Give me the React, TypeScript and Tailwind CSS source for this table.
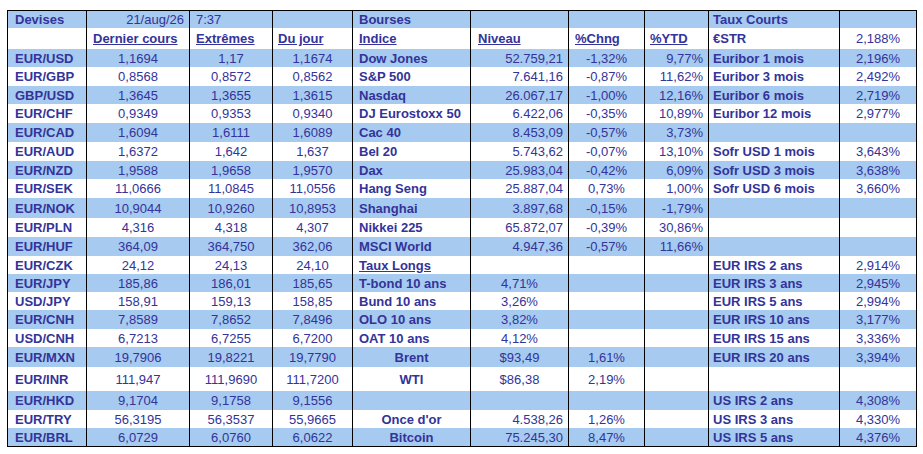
import React from "react";

type Align = "l" | "c" | "r";
type Cell = { t: string; b?: boolean; u?: boolean; a?: Align };

const rowsRaw: string[][] = [
  ["Devises", "21/aug/26", "7:37", "", "Bourses", "", "", "", "Taux Courts", ""],
  ["", "Dernier cours", "Extrêmes", "Du jour", "Indice", "Niveau", "%Chng", "%YTD", "€STR", "2,188%"],
  ["EUR/USD", "1,1694", "1,17", "1,1674", "Dow Jones", "52.759,21", "-1,32%", "9,77%", "Euribor 1 mois", "2,196%"],
  ["EUR/GBP", "0,8568", "0,8572", "0,8562", "S&P 500", "7.641,16", "-0,87%", "11,62%", "Euribor 3 mois", "2,492%"],
  ["GBP/USD", "1,3645", "1,3655", "1,3615", "Nasdaq", "26.067,17", "-1,00%", "12,16%", "Euribor 6 mois", "2,719%"],
  ["EUR/CHF", "0,9349", "0,9353", "0,9340", "DJ Eurostoxx 50", "6.422,06", "-0,35%", "10,89%", "Euribor 12 mois", "2,977%"],
  ["EUR/CAD", "1,6094", "1,6111", "1,6089", "Cac 40", "8.453,09", "-0,57%", "3,73%", "", ""],
  ["EUR/AUD", "1,6372", "1,642", "1,637", "Bel 20", "5.743,62", "-0,07%", "13,10%", "Sofr USD 1 mois", "3,643%"],
  ["EUR/NZD", "1,9588", "1,9658", "1,9570", "Dax", "25.983,04", "-0,42%", "6,09%", "Sofr USD 3 mois", "3,638%"],
  ["EUR/SEK", "11,0666", "11,0845", "11,0556", "Hang Seng", "25.887,04", "0,73%", "1,00%", "Sofr USD 6 mois", "3,660%"],
  ["EUR/NOK", "10,9044", "10,9260", "10,8953", "Shanghai", "3.897,68", "-0,15%", "-1,79%", "", ""],
  ["EUR/PLN", "4,316", "4,318", "4,307", "Nikkei 225", "65.872,07", "-0,39%", "30,86%", "", ""],
  ["EUR/HUF", "364,09", "364,750", "362,06", "MSCI World", "4.947,36", "-0,57%", "11,66%", "", ""],
  ["EUR/CZK", "24,12", "24,13", "24,10", "Taux Longs", "", "", "", "EUR IRS 2 ans", "2,914%"],
  ["EUR/JPY", "185,86", "186,01", "185,65", "T-bond 10 ans", "4,71%", "", "", "EUR IRS 3 ans", "2,945%"],
  ["USD/JPY", "158,91", "159,13", "158,85", "Bund 10 ans", "3,26%", "", "", "EUR IRS 5 ans", "2,994%"],
  ["EUR/CNH", "7,8589", "7,8652", "7,8496", "OLO 10 ans", "3,82%", "", "", "EUR IRS 10 ans", "3,177%"],
  ["USD/CNH", "6,7213", "6,7255", "6,7200", "OAT 10 ans", "4,12%", "", "", "EUR IRS 15 ans", "3,336%"],
  ["EUR/MXN", "19,7906", "19,8221", "19,7790", "Brent", "$93,49", "1,61%", "", "EUR IRS 20 ans", "3,394%"],
  ["EUR/INR", "111,947", "111,9690", "111,7200", "WTI", "$86,38", "2,19%", "", "", ""],
  ["EUR/HKD", "9,1704", "9,1758", "9,1556", "", "", "", "", "US IRS 2 ans", "4,308%"],
  ["EUR/TRY", "56,3195", "56,3537", "55,9665", "Once d'or", "4.538,26", "1,26%", "", "US IRS 3 ans", "4,330%"],
  ["EUR/BRL", "6,0729", "6,0760", "6,0622", "Bitcoin", "75.245,30", "8,47%", "", "US IRS 5 ans", "4,376%"],
];

const heights = [
  "h-[17px]", "h-[21px]", "h-[18px]", "h-[19px]", "h-[18px]", "h-[19px]", "h-[19px]", "h-[19px]",
  "h-[18px]", "h-[19px]", "h-[20px]", "h-[19px]", "h-[19px]", "h-[18px]", "h-[18px]", "h-[18px]",
  "h-[19px]", "h-[18px]", "h-[20px]", "h-[24px]", "h-[19px]", "h-[18px]", "h-[18px]",
];

const defaultAlign: Align[] = ["l", "c", "c", "c", "l", "r", "c", "r", "l", "c"];
const defaultBold = [true, false, false, false, true, false, false, false, true, false];

function spec(r: number, c: number): Cell {
  const t = rowsRaw[r][c];
  let a = defaultAlign[c];
  let b = defaultBold[c];
  let u = false;
  if (r === 0) {
    if (c === 1) a = "r";
    if (c === 2) a = "l";
  }
  if (r === 1 && c >= 1 && c <= 7) {
    a = "l";
    b = true;
    u = true;
  }
  if (r === 13 && c === 4) u = true;
  if (r >= 14 && r <= 17 && c === 5) a = "c";
  if ((r === 18 || r === 19) && c === 4) a = "c";
  if ((r === 18 || r === 19) && c === 5) a = "c";
  if ((r === 21 || r === 22) && c === 4) a = "c";
  return { t, a, b, u };
}

const padL = ["pl-[7px]", "pl-[6px]", "pl-[6px]", "pl-[5px]", "pl-[6px]", "pl-[7px]", "pl-[6px]", "pl-[5px]", "pl-[4px]", "pl-[6px]"];

export default function App() {
  return (
    <div className="min-h-screen bg-white pt-[10px] pl-[7px] font-['Liberation_Sans',Arial,sans-serif] text-[13px] text-[#333399]">
      <div className="flex w-[910px] flex-col border border-black">
        {rowsRaw.map((row, r) => (
          <div
            key={r}
            className={`grid grid-cols-[79px_103px_83px_80px_118px_98px_76px_64px_131px_76px] ${heights[r]} ${
              r % 2 === 0 ? "bg-[#a6caf0]" : "bg-white"
            }`}
          >
            {row.map((_, c) => {
              const s = spec(r, c);
              const just = s.a === "l" ? `justify-start ${padL[c]}` : s.a === "r" ? "justify-end pr-[5px]" : "justify-center";
              return (
                <div
                  key={c}
                  className={`flex items-center overflow-hidden whitespace-nowrap leading-[15px] ${just} ${
                    c < 9 ? "border-r border-black" : ""
                  } ${s.b ? "font-bold" : "font-normal"} ${s.u ? "underline" : ""}`}
                >
                  {s.t}
                </div>
              );
            })}
          </div>
        ))}
      </div>
    </div>
  );
}
